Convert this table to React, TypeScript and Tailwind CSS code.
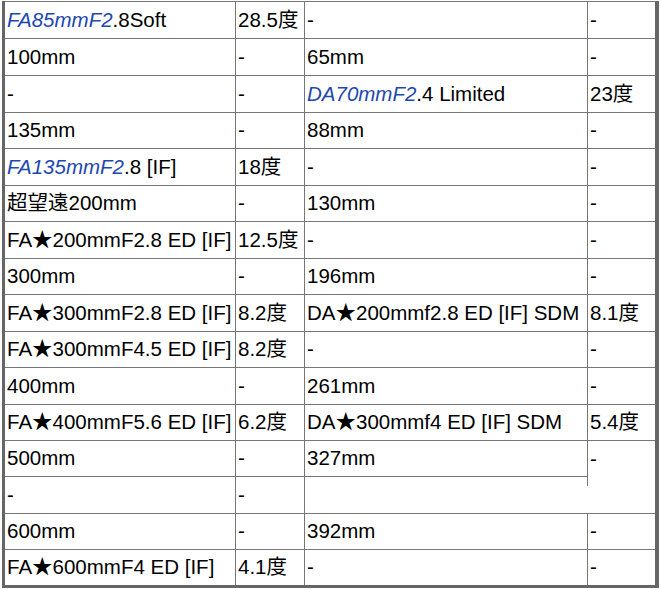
import React from 'react';

const Lens = ({ link, rest }: { link: string; rest: string }) => (
  <>
    <span className="italic text-[#1c48b0]">{link}</span>
    {rest}
  </>
);

const rows: React.ReactNode[][] = [
  [<Lens link="FA85mmF2" rest=".8Soft" />, '28.5度', '-', '-'],
  ['100mm', '-', '65mm', '-'],
  ['-', '-', <Lens link="DA70mmF2" rest=".4 Limited" />, '23度'],
  ['135mm', '-', '88mm', '-'],
  [<Lens link="FA135mmF2" rest=".8 [IF]" />, '18度', '-', '-'],
  ['超望遠200mm', '-', '130mm', '-'],
  ['FA★200mmF2.8 ED [IF]', '12.5度', '-', '-'],
  ['300mm', '-', '196mm', '-'],
  ['FA★300mmF2.8 ED [IF]', '8.2度', 'DA★200mmf2.8 ED [IF] SDM', '8.1度'],
  ['FA★300mmF4.5 ED [IF]', '8.2度', '-', '-'],
  ['400mm', '-', '261mm', '-'],
  ['FA★400mmF5.6 ED [IF]', '6.2度', 'DA★300mmf4 ED [IF] SDM', '5.4度'],
  ['500mm', '-', '327mm', '-'],
  ['-', '-', ''],
  ['600mm', '-', '392mm', '-'],
  ['FA★600mmF4 ED [IF]', '4.1度', '-', '-'],
];

export default function App() {
  return (
    <div
      className="w-[661px] h-[590px] bg-white pt-px pl-[2px] text-[20.5px] text-black"
      style={{ fontFamily: '"Liberation Sans", Arial, "Noto Sans CJK JP", sans-serif' }}
    >
      <div className="w-[657px] border-l-[3px] border-r-[4px] border-b-[3px] border-[#666]">
        <div className="grid grid-cols-[231px_69px_283px_67px] grid-rows-[37px_37px_37px_36px_37px_36px_37px_36px_37px_36px_37px_36px_36px_37px_36px_35px] border-t border-[#777]">
          {rows.map((row, r) =>
            row.map((cell, c) => {
              const last = r === rows.length - 1;
              // 500mm row: last column spans two rows, its left line stops short
              if (r === 12 && c === 3) {
                return (
                  <div key={`${r}-${c}`} className="row-span-2 border-b border-[#777]">
                    <div className="h-[36px] flex items-center pl-[2px] whitespace-nowrap leading-none">{cell}</div>
                  </div>
                );
              }
              if (r === 13 && c === 2) {
                return (
                  <div key={`${r}-${c}`} className="border-b border-[#777] flex justify-end items-start">
                    <div className="w-px h-[9px] bg-[#777]" />
                  </div>
                );
              }
              const borders = [c < 3 ? 'border-r' : '', !last ? 'border-b' : ''].join(' ');
              return (
                <div
                  key={`${r}-${c}`}
                  className={`${borders} border-[#777] flex items-center pl-[2px] whitespace-nowrap leading-none`}
                >
                  {cell}
                </div>
              );
            })
          )}
        </div>
      </div>
    </div>
  );
}
